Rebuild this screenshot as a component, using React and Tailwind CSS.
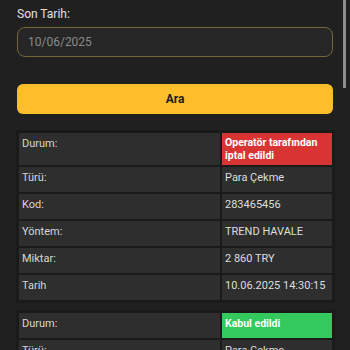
import React from "react";

function Row({ label, value, status, tall }) {
  const h = tall ? "h-[32px]" : "h-[25px]";
  let valueCell;
  if (status === "red") {
    valueCell = (
      <div className={`${h} bg-[#d83434] px-[3px] pt-[4px] text-[10.5px] leading-[12.5px] font-bold text-white`}>
        {value}
      </div>
    );
  } else if (status === "green") {
    valueCell = (
      <div className={`${h} bg-[#34c95d] px-[3px] pt-[4px] text-[10.5px] leading-[14px] font-bold text-white`}>
        {value}
      </div>
    );
  } else {
    valueCell = (
      <div className={`${h} bg-[#2e2e2e] px-[3px] pt-[3px] text-[11px] leading-[16px] text-[#dedede]`}>
        {value}
      </div>
    );
  }
  return (
    <div className="grid grid-cols-[201px_110px] gap-[2px]">
      <div className={`${h} bg-[#2e2e2e] px-[3px] pt-[3px] text-[11px] leading-[16px] text-[#d6d6d6]`}>
        {label}
      </div>
      {valueCell}
    </div>
  );
}

function Table({ rows }) {
  return (
    <div className="mx-[16px] w-[319px] bg-[#1a1a1a] p-[3px] flex flex-col gap-[2px]">
      {rows.map((r, i) => (
        <Row key={i} {...r} />
      ))}
    </div>
  );
}

export default function App() {
  const rows1 = [
    { label: "Durum:", value: "Operatör tarafından iptal edildi", status: "red", tall: true },
    { label: "Türü:", value: "Para Çekme" },
    { label: "Kod:", value: "283465456" },
    { label: "Yöntem:", value: "TREND HAVALE" },
    { label: "Miktar:", value: "2 860 TRY" },
    { label: "Tarih", value: "10.06.2025 14:30:15" },
  ];
  const rows2 = [
    { label: "Durum:", value: "Kabul edildi", status: "green" },
    { label: "Türü:", value: "Para Çekme" },
  ];
  return (
    <div className="relative w-[350px] h-[350px] overflow-hidden bg-[#202020] font-['Roboto',sans-serif]">
      <div className="px-[17px] pt-[6px]">
        <div className="text-[12px] leading-[16px] text-[#e2e2e2]">Son Tarih:</div>
        <div className="mt-[5px] h-[30px] w-[316px] rounded-[8px] border border-[#74663a] bg-[#262626] pl-[10px] flex items-center text-[12px] text-[#8a8a8a]">
          10/06/2025
        </div>
        <div className="mt-[27px] h-[30px] w-[316px] rounded-[6px] bg-[#fdbe2b] flex items-center justify-center text-[12px] font-bold text-[#1c1c1c]">
          Ara
        </div>
      </div>
      <div className="mt-[16px]">
        <Table rows={rows1} />
      </div>
      <div className="mt-[7px]">
        <Table rows={rows2} />
      </div>
      <div className="absolute left-[343px] top-0 w-[3px] h-[88px] bg-[#8c8c8c]" />
    </div>
  );
}
